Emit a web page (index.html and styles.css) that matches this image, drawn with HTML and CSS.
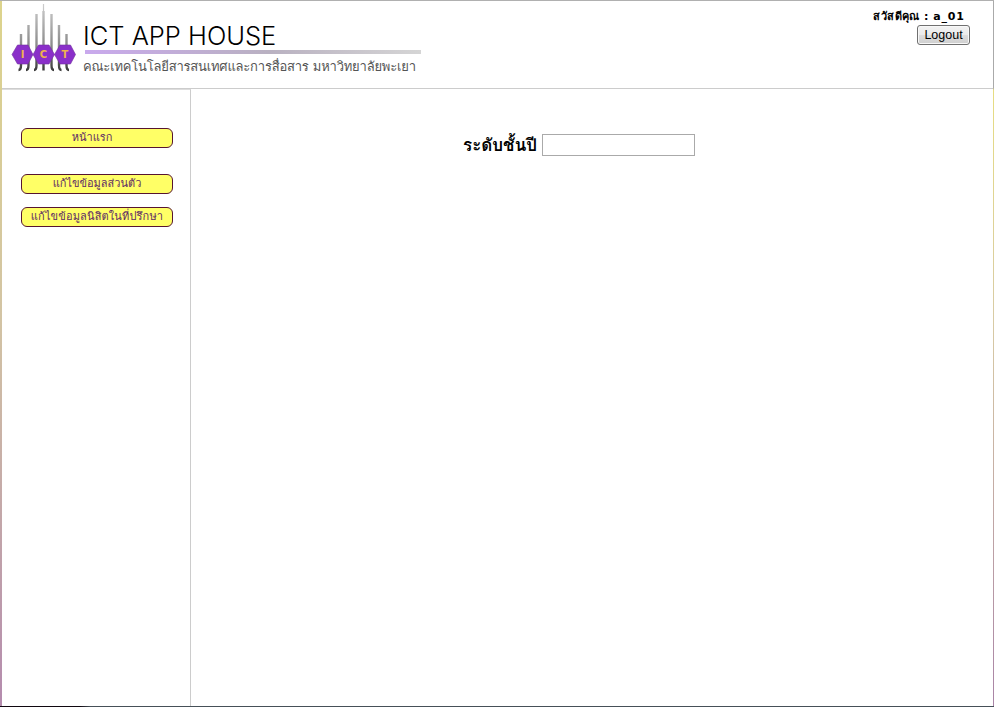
FILE: index.html
```html
<!DOCTYPE html>
<html lang="th">
<head>
<meta charset="utf-8">
<title>ICT APP HOUSE</title>
<link rel="stylesheet" href="styles.css">
</head>
<body>
<div class="frame">
  <div class="page">
    <header class="header">
      <svg class="logo" width="66" height="72" viewBox="0 0 66 72" aria-hidden="true">
        <defs>
          <linearGradient id="steel" gradientUnits="userSpaceOnUse" x1="0" y1="4" x2="0" y2="70">
            <stop offset="0" stop-color="#ccc"/><stop offset=".6" stop-color="#8c8c8c"/><stop offset="1" stop-color="#3a3a3a"/>
          </linearGradient>
        </defs>
        <g fill="none" stroke="url(#steel)" stroke-width="2.4">
          <path d="M10 33V64Q10 69 7.500 69M17.500 24V64Q17.500 69 15 69M25.500 13V64Q25.500 69 23 69M40.500 13V64Q40.500 69 43 69M48 24V64Q48 69 50.500 69M55.500 33V64Q55.500 69 58 69"/>
          <path d="M32.500 10V69.500" stroke-width="2.4"/>
          <path d="M32.500 3V12" stroke-width="1.2"/>
        </g>
        <g fill="#8a2fc9" stroke="#71309e" stroke-width=".6">
          <path d="M1 53.500L6.500 44H17L22 53.500L17 63H6.500Z"/>
          <path d="M22 53.500L27.500 44H38L43.500 53.500L38 63H27.500Z"/>
          <path d="M43.500 53.500L49 44H59.500L64.500 53.500L59.500 63H49Z"/>
        </g>
        <g class="logo-letters">
          <text x="11.500" y="57">I</text><text x="32.500" y="57">C</text><text x="54" y="57">T</text>
        </g>
      </svg>
      <div class="brand">
        <div class="brand-name">ICT APP HOUSE</div>
        <div class="brand-rule"></div>
        <div class="brand-sub">คณะเทคโนโลยีสารสนเทศและการสื่อสาร มหาวิทยาลัยพะเยา</div>
      </div>
      <div class="user">
        <div class="greeting">สวัสดีคุณ : <span class="username">a_01</span></div>
        <button class="logout" type="button">Logout</button>
      </div>
    </header>
    <div class="body">
      <nav class="sidebar">
        <a class="item item-home">หน้าแรก</a>
        <a class="item">แก้ไขข้อมูลส่วนตัว</a>
        <a class="item item-student">แก้ไขข้อมูลนิสิตในที่ปรึกษา</a>
      </nav>
      <main class="main">
        <label class="year-label" for="year">ระดับชั้นปี</label>
        <input class="year" id="year" type="text">
      </main>
    </div>
  </div>
</div>
</body>
</html>
```
FILE: styles.css
```css
* { box-sizing: border-box; }
body { margin: 0; font-family: Tahoma, Loma, Waree, "Noto Sans Thai Looped", "Noto Sans", "Noto Sans Thai", sans-serif; color: #000; background: #fff; }
.frame {
  height: 707px;
  padding: 1px 1px 1px 2px;
  background:
    linear-gradient(#b0b0b0, #b0b0b0) top / 100% 1px no-repeat,
    linear-gradient(90deg, #100810 0 80px, #465058 90px) bottom / 100% 1px no-repeat,
    linear-gradient(#aaa 0 88px, #e6dc82 90px, #d8cba4 45%, #a983a6) right / 1px 100% no-repeat,
    linear-gradient(#ddd48c, #d3c4a4 45%, #b48bae) left / 2px 100% no-repeat;
}
.page { height: 705px; background: #fff; display: flex; flex-direction: column; }
.header { height: 88px; flex: none; display: flex; border-bottom: 1px solid #ccc; }
.logo { margin-left: 9px; flex: none; }
.logo-letters { font: bold 10px "DejaVu Sans", sans-serif; fill: #edb34c; text-anchor: middle; }
.brand { margin-left: 6px; width: 338px; white-space: nowrap; }
.brand-name { margin-top: 19px; height: 30px; font: 300 25.500px/31px Inter, sans-serif; }
.brand-rule { height: 4px; margin-left: 2px; background: linear-gradient(90deg, #c9a9ed, #b9b1c1 55%, #d5d5d5); }
.brand-sub { font-size: 13px; line-height: 25px; letter-spacing: -.2px; font-weight: 300; color: #555; }
.user { margin-left: auto; margin-right: 23px; display: flex; flex-direction: column; align-items: flex-end; }
.greeting { margin: 7px 6px 0 0; height: 17px; font: bold 11px/17px "DejaVu Sans", sans-serif; letter-spacing: .4px; white-space: nowrap; }
.username { letter-spacing: .8px; margin-right: -.6px; }
.logout {
  width: 53px; height: 20px; padding: 0; border: 1px solid #707070; border-radius: 3px;
  font: 12.500px/18px "Liberation Sans", sans-serif; color: #000;
  background: linear-gradient(#f2f2f2, #ebebeb 50%, #ddd 51%, #cfcfcf); box-shadow: inset 0 0 0 1px #f8f8f8;
}
.body { flex: 1; display: flex; }
.sidebar { width: 189px; padding: 38px 17px 0 19px; border-right: 1px solid #ccc; border-top: 1px solid #ddd; display: flex; flex-direction: column; gap: 13px; }
.item {
  height: 20px; border: 1px solid #571530; border-radius: 6px; background: #ff6;
  color: #602c65; font-size: 11px; line-height: 16px; text-align: center; white-space: nowrap;
}
.item-home { margin-bottom: 13px; padding-right: 10px; }
.item-student { letter-spacing: .15px; }
.main { flex: 1; display: flex; align-items: flex-start; padding: 45px 0 0 272px; }
.year-label { width: 79px; font-size: 17px; line-height: 21px; font-weight: bold; white-space: nowrap; }
.year { width: 153px; height: 22px; padding: 1px; border: 1px solid #aaa; background: #fff; outline: none; }
```
